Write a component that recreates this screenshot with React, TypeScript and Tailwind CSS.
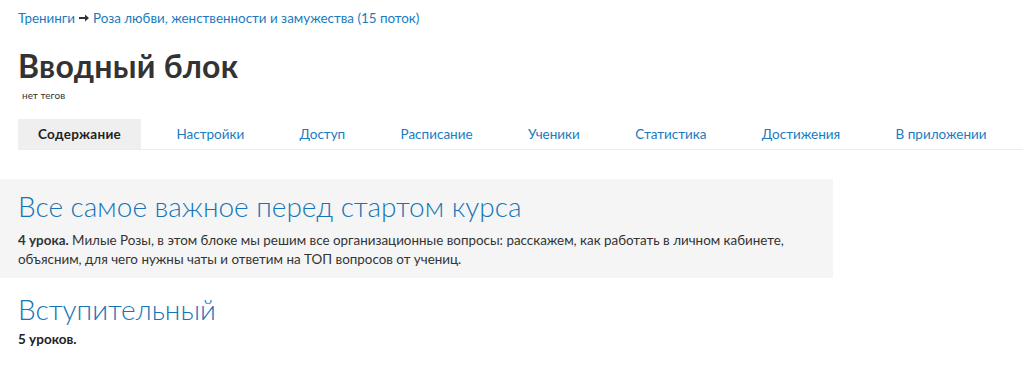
import React from 'react';

const tabs = ['Содержание', 'Настройки', 'Доступ', 'Расписание', 'Ученики', 'Статистика', 'Достижения', 'В приложении'];

const App: React.FC = () => {
  return (
    <div className="min-h-[375px] bg-white text-[#333] font-['Lato','Liberation_Sans',sans-serif]">
      {/* Header */}
      <div className="pl-[18px] pt-[9px]">
        <div className="flex items-center text-[13.4px] leading-[18px] text-[#1a7bbf]">
          <span>Тренинги</span>
          <svg width="10" height="8" viewBox="0 0 10 8" className="mx-[4px]">
            <path d="M0 3h6V0.5L10 4 6 7.5V5H0z" fill="#333" />
          </svg>
          <span>Роза любви, женственности и замужества (15 поток)</span>
        </div>
        <h1 className="mt-[20px] text-[32px] leading-[38px] font-bold tracking-[0.3px] text-[#333]">Вводный блок</h1>
        <div className="mt-[4px] pl-[4px] text-[10px] leading-[12px] text-[#333]">нет тегов</div>

        {/* Tabs */}
        <div className="mt-[18px] flex gap-[15.3px] border-b border-[#ececec]">
          {tabs.map((t, i) => (
            <div
              key={t}
              className={
                i === 0
                  ? 'shrink-0 whitespace-nowrap px-[20px] h-[30px] flex items-center bg-[#efefef] text-[13.5px] tracking-[0.3px] font-bold text-[#222]'
                  : 'shrink-0 whitespace-nowrap px-[20px] h-[30px] flex items-center text-[13.5px] text-[#1a7bbf]'
              }
            >
              {t}
            </div>
          ))}
        </div>
      </div>

      {/* Blocks */}
      <div className="mt-[29px] w-[833px] bg-[#f5f5f5] px-[18px] pt-[10px] pb-[9px]">
        <h2 className="text-[28px] leading-[34px] font-light text-[#1675b9]">Все самое важное перед стартом курса</h2>
        <p className="mt-[8px] text-[13.4px] leading-[19px] text-[#333]">
          <span className="font-bold">4 урока.</span> Милые Розы, в этом блоке мы решим все организационные вопросы: расскажем, как работать в личном кабинете, объясним, для чего нужны чаты и ответим на ТОП вопросов от учениц.
        </p>
      </div>
      <div className="px-[18px] pt-[14px]">
        <h2 className="text-[28px] leading-[34px] font-light text-[#1675b9]">Вступительный</h2>
        <p className="mt-[4px] text-[13.5px] leading-[19px] font-bold text-[#222]">5 уроков.</p>
      </div>
    </div>
  );
};

export default App;
